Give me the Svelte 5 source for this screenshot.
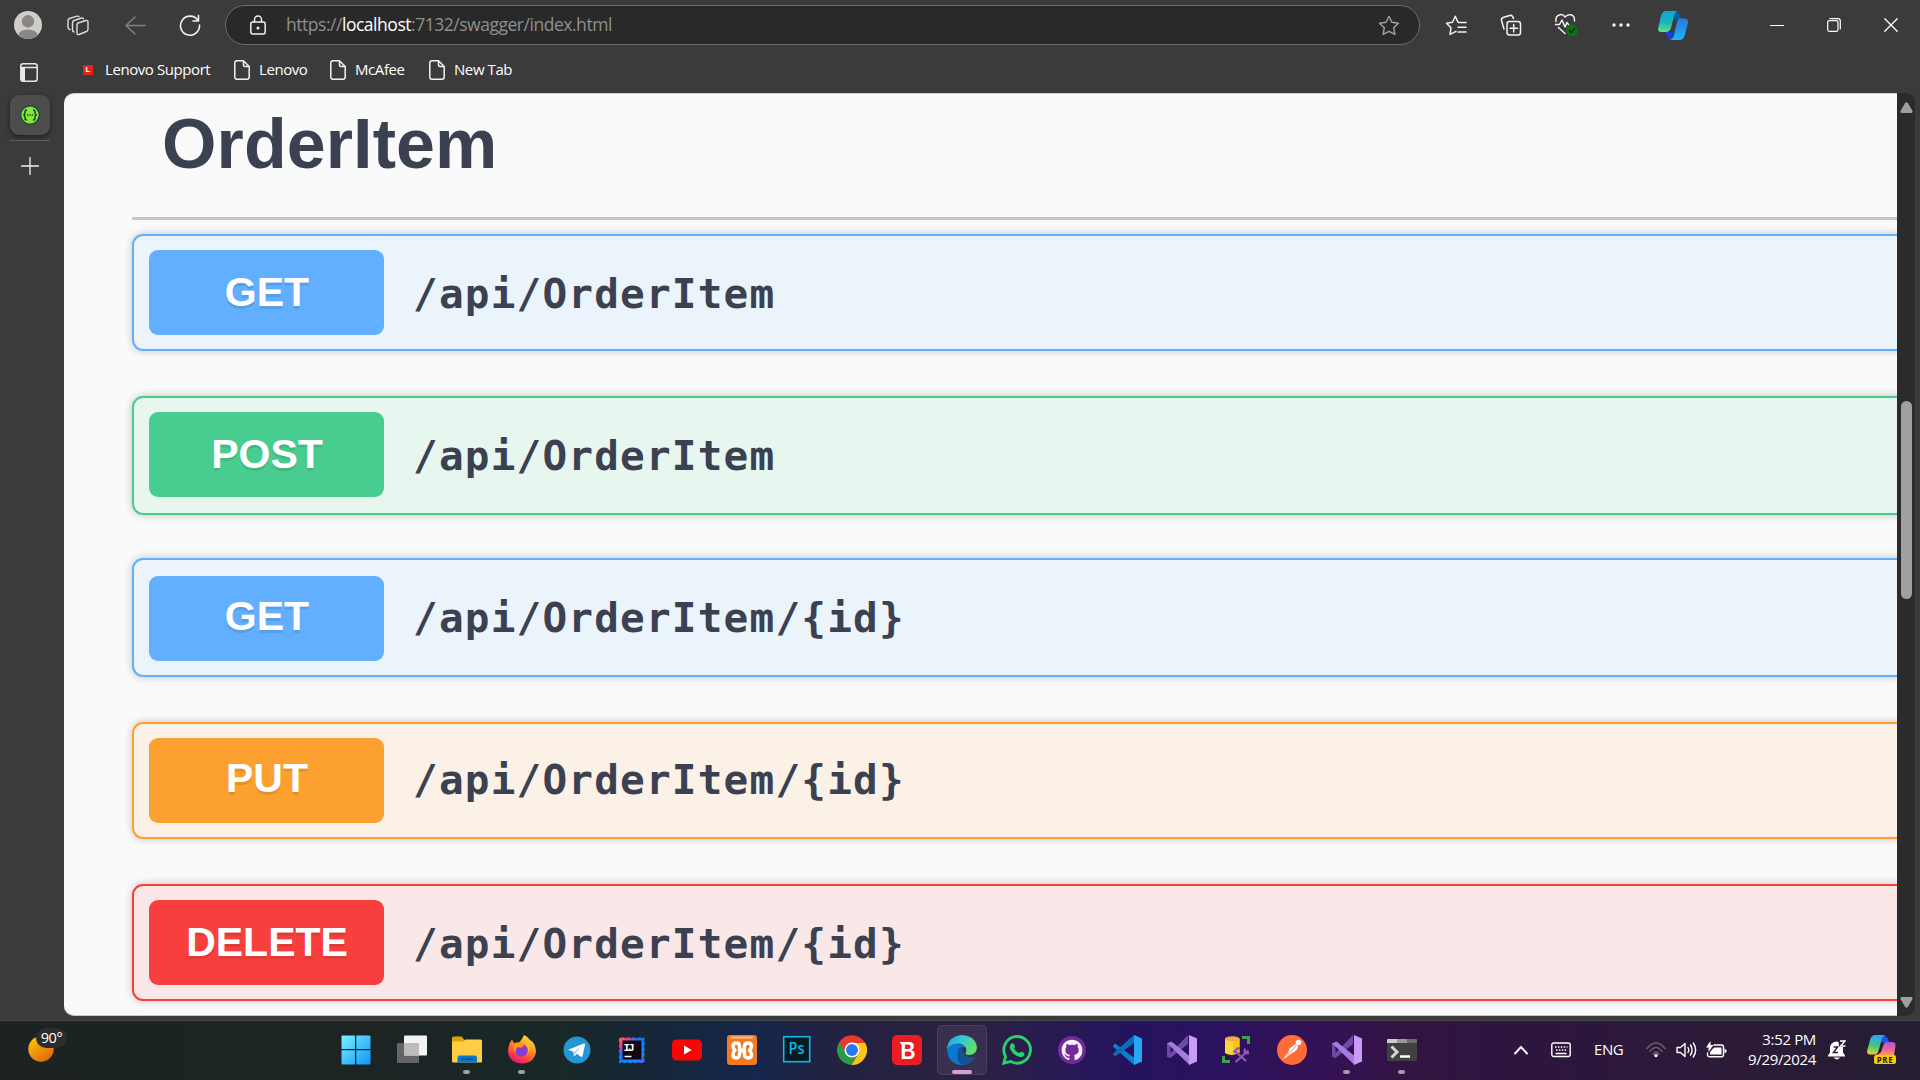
<script>
  const operations = [
    { method: 'GET', path: '/api/OrderItem' },
    { method: 'POST', path: '/api/OrderItem' },
    { method: 'GET', path: '/api/OrderItem/{id}' },
    { method: 'PUT', path: '/api/OrderItem/{id}' },
    { method: 'DELETE', path: '/api/OrderItem/{id}' },
  ];
  const bookmarks = ['Lenovo', 'McAfee', 'New Tab'];
  const apps = [
    { id: 'start' }, { id: 'taskview' }, { id: 'explorer', open: true }, { id: 'firefox', open: true },
    { id: 'telegram' }, { id: 'idea' }, { id: 'youtube' }, { id: 'xampp' }, { id: 'photoshop' },
    { id: 'chrome' }, { id: 'bitdefender' }, { id: 'edge', active: true }, { id: 'whatsapp' },
    { id: 'github' }, { id: 'vscode' }, { id: 'vs' }, { id: 'ssms' }, { id: 'postman' },
    { id: 'vs', open: true }, { id: 'terminal', open: true },
  ];
</script>

{#snippet visualStudio()}
  <path d="M0 8.500 3.500 7v16L0 21.500z" fill="#6d4aa3" />
  <path d="M0 21.500 3.500 23 21 9V0L3 18.500z" fill="#6c4aa5" />
  <path d="M0 8.500 4.500 6.500 22.500 21v9L3 11z" fill="#a67be0" />
  <path d="M22 0 30 3.500v23L22 30z" fill="#c99bfb" />
{/snippet}

<div class="screen">
  <header class="toolbar">
    <span class="cell">
      <svg width="28" height="28" viewBox="0 0 28 28">
        <defs><clipPath id="face"><circle cx="14" cy="14" r="14" /></clipPath></defs>
        <g clip-path="url(#face)">
          <rect width="28" height="28" fill="#d0cec9" />
          <circle cx="14" cy="10.300" r="6.200" fill="#8a8683" />
          <ellipse cx="14" cy="25" rx="10" ry="6.600" fill="#8a8683" />
        </g>
      </svg>
    </span>
    <span class="cell">
      <svg class="line" width="22" height="21" viewBox="0 0 22 21" stroke="#dcdcdc" stroke-width="1.400">
        <path d="M11 8 19 5.500Q21 5 21 7v7Q21 16 19.500 16.500L12 19.500Q10 20 10 18V10Q10 8.500 11 8z" />
        <path d="M7 17Q5.500 16.500 5.500 15V8Q5.500 6 7 5.500L14.500 3Q16 2.600 16.500 4" />
        <path d="M3 14.500Q1 14 1 12.500V5.500Q1 4 2.500 3.500L10 1.200Q11.500 .8 12 1.800" />
      </svg>
    </span>
    <span class="cell">
      <svg class="line" width="21" height="19" viewBox="0 0 21 19" stroke="#828282" stroke-width="1.400"><path d="M10 1 1 9.500 10 18M1 9.500H20" /></svg>
    </span>
    <span class="cell">
      <svg class="line" width="22" height="22" viewBox="0 0 22 22" stroke="#f2f2f2" stroke-width="1.600"><path d="M19 6.500A9.500 9.500 0 1 0 20.500 11M19.500 1.500V7H14" /></svg>
    </span>
    <div class="address">
      <svg class="line lock" width="16" height="20" viewBox="0 0 16 20" stroke="#f0f0f0" stroke-width="1.500"><rect x=".8" y="7" width="14.400" height="12" rx="2" /><path d="M4.500 7V4.500a3.500 3.500 0 0 1 7 0V7" /><circle cx="8" cy="13" r=".8" fill="#f0f0f0" /></svg>
      <span class="url">https://<b>localhost</b>:7132/swagger/index.html</span>
      <svg class="line star" width="22" height="21" viewBox="0 0 22 21" stroke="#a3a3a3" stroke-width="1.400"><path d="M11 1.300 13.900 7.300 20.500 8.200 15.700 12.800 16.900 19.400 11 16.300 5.100 19.400 6.300 12.800 1.500 8.200 8.100 7.300z" /></svg>
    </div>
    <span class="cell">
      <svg class="line" width="22" height="21" viewBox="0 0 22 21" stroke="#f2f2f2" stroke-width="1.500"><path d="M13.500 7.300H13L10.300 1.300 7.500 7.300 1.500 8.200 6 12.800 5 19.400 11 16.300M13.500 7.500H21M13 12.200H21M13 16.900H21" /></svg>
    </span>
    <span class="cell">
      <svg class="line" width="22" height="22" viewBox="0 0 22 22" stroke="#f2f2f2" stroke-width="1.500"><rect x="7" y="7.500" width="13.500" height="13.500" rx="2.500" /><path d="M13.700 10.500v7.500M10 14.200h7.500M4 15 1.500 6.500Q1 4.500 3 3.500L10.500 1.200Q12.500 1 13.500 4.500" /></svg>
    </span>
    <span class="cell">
      <svg class="line" width="24" height="24" viewBox="0 0 24 24" stroke="#f2f2f2" stroke-width="1.500"><path d="M2 8.500Q1 3 6 1.700 9 1 11 4 13.500 1 17 1.800 21 3 20.500 8M1.500 11.500H5.500L8 7 11 14 13 9.500 14.500 11.500M4.500 14.500 11 20.500" /><circle cx="18" cy="17.500" r="6" fill="#107010" stroke="none" /><path d="M15.300 17.600 17.300 19.500 20.700 15.800" stroke="#062c06" /></svg>
    </span>
    <span class="cell">
      <svg width="18" height="4" viewBox="0 0 18 4" fill="#f5f5f5"><circle cx="2" cy="2" r="1.700" /><circle cx="9" cy="2" r="1.700" /><circle cx="16" cy="2" r="1.700" /></svg>
    </span>
    <span class="cell">
      <svg width="30" height="29" viewBox="0 0 30 29">
        <defs>
          <linearGradient id="cpA" x1="0" y1="0" x2="0" y2="1"><stop offset="0" stop-color="#0fa4dd" /><stop offset=".55" stop-color="#19b5b8" /><stop offset="1" stop-color="#67de8d" /></linearGradient>
          <linearGradient id="cpB" x1="0" y1="0" x2="0" y2="1"><stop offset="0" stop-color="#2b77dd" /><stop offset="1" stop-color="#18b5fb" /></linearGradient>
        </defs>
        <path d="M16 0q5 0 6 4l1 4h-8z" fill="#0a5f97" />
        <path d="M7 21h8l-1 8q-4 0-5-4z" fill="#1b3fd0" />
        <path d="M8 0H19q-2 1-3 5L13 17q-1.500 4-5 4H3Q-.5 21 .2 17L3 5Q4.500 0 8 0z" fill="url(#cpA)" />
        <path d="M21 7.500h6q3.500 0 3 4l-3 12q-1.500 5.500-6 5.500h-9q3-1 4-5l3-12.500q.5-4 2-4z" fill="url(#cpB)" />
      </svg>
    </span>
    <i></i>
    <span class="cell"><svg class="line" width="14" height="14" viewBox="0 0 14 14" stroke="#fff" stroke-width="1.200"><path d="M0 7.500H14" /></svg></span>
    <span class="cell"><svg class="line" width="14" height="14" viewBox="0 0 14 14" stroke="#fff" stroke-width="1.200"><rect x=".7" y="2.700" width="10.300" height="10.600" rx="1.500" /><path d="M3 .7H11Q13.300.7 13.300 3V11" /></svg></span>
    <span class="cell"><svg class="line" width="14" height="14" viewBox="0 0 14 14" stroke="#fff" stroke-width="1.300"><path d="M.8.8 13.200 13.200M13.200.8.8 13.200" /></svg></span>
  </header>

  <nav class="bookmarks">
    <svg class="panel line" width="18" height="19" viewBox="0 0 18 19" stroke="#e8e8e8" stroke-width="1.500"><rect x=".8" y=".8" width="16.400" height="17.400" rx="2.500" /><path d="M1 4.500H17" /><path d="M1 5H5V18H2.500L1 16.500z" fill="#e8e8e8" stroke="none" /></svg>
    <a class="bm lead"><span class="fav">L</span><span class="name">Lenovo Support</span></a>
    {#each bookmarks as name, i}
      <a class="bm b{i}">
        <svg class="line" width="16" height="20" viewBox="0 0 16 20" stroke="#f2f2f2" stroke-width="1.500"><path d="M3 .8H9.500L15.200 6.500V17Q15.200 19.200 13 19.200H3Q.8 19.200.8 17V3Q.8.8 3 .8zM9.500 1V5Q9.500 6.500 11 6.500H15" /></svg>
        <span class="name">{name}</span>
      </a>
    {/each}
  </nav>

  <div class="body">
    <aside>
      <div class="tab">
        <svg width="20" height="20" viewBox="0 0 20 20"><circle cx="10" cy="10" r="9.300" fill="#85ea2d" stroke="#1f4a3c" stroke-width="1.400" /><g fill="none" stroke="#173647" stroke-width="1.400"><path d="M7 5Q5 5 5 7 5 10 3.300 10 5 10 5 13 5 15 7 15M13 5Q15 5 15 7 15 10 16.700 10 15 10 15 13 15 15 13 15" /><path d="M7 10H13.500" stroke-dasharray="1.300 1.100" /></g></svg>
      </div>
      <hr />
      <svg class="line" width="18" height="18" viewBox="0 0 18 18" stroke="#f0f0f0" stroke-width="1.300"><path d="M9 .5V17.500M.5 9H17.500" /></svg>
    </aside>
    <main>
      <h1>OrderItem</h1>
      <div class="ops">
        {#each operations as op}
          <section class="op {op.method.toLowerCase()}">
            <span class="method">{op.method}</span>
            <span class="path">{op.path}</span>
          </section>
        {/each}
      </div>
    </main>
    <div class="scroll">
      <svg width="13" height="11" viewBox="0 0 13 11"><path d="M5 1.200Q6.500-.5 8 1.200L12.500 9Q13 11 11 11H2Q0 11 .5 9z" fill="#a0a0a0" /></svg>
      <div class="thumb"></div>
      <svg class="down" width="13" height="11" viewBox="0 0 13 11"><path d="M5 1.200Q6.500-.5 8 1.200L12.500 9Q13 11 11 11H2Q0 11 .5 9z" fill="#a0a0a0" /></svg>
    </div>
  </div>

  <footer>
    <div class="weather">
      <svg width="26" height="26" viewBox="0 0 26 26"><defs><linearGradient id="sun" x1="0" y1="0" x2=".8" y2="1"><stop offset="0" stop-color="#ffcf08" /><stop offset="1" stop-color="#e0620c" /></linearGradient></defs><circle cx="13" cy="13" r="12.700" fill="url(#sun)" /></svg>
      <span class="temp">90°</span>
    </div>
    <div class="apps">
      {#each apps as app}
        <div class="slot {app.id}" class:active={app.active}>
          <svg width="30" height="30" viewBox="0 0 30 30">
            {#if app.id === 'start'}
              <defs><linearGradient id="win" gradientUnits="userSpaceOnUse" x1="0" y1="0" x2="30" y2="30"><stop offset="0" stop-color="#7df3ff" /><stop offset="1" stop-color="#0a94fb" /></linearGradient></defs>
              <path d="M.5 1.500Q.5.500 1.500.500H14V14H.5zM15.300.500H28.500Q29.500.500 29.500 1.500V14H15.300zM.5 15.300H14V29.500H1.500Q.5 29.500.5 28.500zM15.300 15.300H29.500V28.500Q29.500 29.500 28.500 29.500H15.300z" fill="url(#win)" />
            {:else if app.id === 'taskview'}
              <rect y="8" width="22" height="20" rx="1" fill="#66646a" /><rect x="7" y=".5" width="23" height="20" rx="1" fill="#f4f4f4" /><rect x="7" y="8" width="15" height="12.500" fill="#bcbcbc" />
            {:else if app.id === 'explorer'}
              <path d="M0 3Q0 1.500 1.500 1.500H9.500L12.500 5V9H0z" fill="#dba208" /><path d="M0 6.500H11L13.500 4.500H28.500Q30 4.500 30 6V26.500Q30 27.500 29 27.500H1Q0 27.500 0 26.500z" fill="#ffcd45" /><path d="M5.500 27.500V23Q5.500 20.500 8 20.500H22.500Q25 20.500 25 23V27.500z" fill="#0b76cc" /><path d="M9 24.200H21.500" stroke="#064b92" stroke-width="1.300" />
            {:else if app.id === 'firefox'}
              <defs><linearGradient id="ff" x1=".8" y1="0" x2=".3" y2="1"><stop offset="0" stop-color="#ffe83d" /><stop offset=".45" stop-color="#ff8b20" /><stop offset=".85" stop-color="#fb2b55" /><stop offset="1" stop-color="#d8148b" /></linearGradient></defs>
              <path d="M5 4.500 7 8.500Q9 7.500 12 7.500 15 5 17 0 20 1 23 5 28.500 8 29 16 28 28 15 28.500 2 28 1 16 1.500 9 5 4.500z" fill="url(#ff)" /><circle cx="14.500" cy="15.500" r="6.200" fill="#8a3bd6" /><path d="M7 8Q14 6 17 11 14 14 11 12 8 14 9 18 5 13 7 8z" fill="#ff9420" /><path d="M18 9Q23 12 20 19 26 12 20 5z" fill="#ffc02b" />
            {:else if app.id === 'telegram'}
              <circle cx="15" cy="15" r="13.500" fill="#2396d3" /><path d="M6 14.700 22 8.500Q23.500 8.300 23 10L20.500 21Q20 22.500 18.500 21.500L14.800 18.700 12.800 21 11.700 20.500 11.500 16.800z" fill="#fff" /><path d="M11.500 17 19.500 11 13.800 18 12.500 20.700z" fill="#b8d8ea" />
            {:else if app.id === 'idea'}
              <defs><linearGradient id="ij" x1="0" y1="0" x2="1" y2="1"><stop offset="0" stop-color="#fe7b4c" /><stop offset=".2" stop-color="#f0388c" /><stop offset=".38" stop-color="#0a7cff" /><stop offset=".75" stop-color="#168bfb" /><stop offset="1" stop-color="#6257e8" /></linearGradient></defs>
              <rect x="2" y="2.500" width="25.500" height="25.500" fill="url(#ij)" /><rect x="5.500" y="5.500" width="19" height="19" fill="#130512" /><rect x="2.300" y="2.800" width="24.900" height="24.900" fill="none" stroke="#000" stroke-width=".8" stroke-dasharray="1.500 4" />
              <text x="6.500" y="15.500" font-size="11" font-family="Liberation Mono" font-weight="700" fill="#fff" textLength="11">IJ</text><path d="M7.500 21.500h7" stroke="#fff" stroke-width="1.500" />
            {:else if app.id === 'youtube'}
              <rect y="4.500" width="30" height="21" rx="4.500" fill="#f90505" /><path d="M12 10.500 19.800 15 12 19.500z" fill="#fff" />
            {:else if app.id === 'xampp'}
              <rect width="30" height="30" rx="3" fill="#f37a24" /><rect x="4" y="1.500" width="22" height="2" fill="#f9ba91" />
              <path d="M12.500 15.300V11Q12.500 8 9.500 8 6 8 6 11.300 6 13.500 8 15.300 6 17 6 19.500 6 23 9.500 23 12.500 22.500 12.500 19.500 12.500 16.500 15 15.300 17.500 14.200 17.500 11 18 8 21 8 24.500 8 24.500 11.300 24.500 13.500 22.500 15.300 24.500 17 24.500 19.500 24.500 23 21 23 17.500 22.500 17.500 19.500V15.300z" fill="none" stroke="#fff" stroke-width="3.400" stroke-linejoin="round" />
            {:else if app.id === 'photoshop'}
              <rect x="1.700" y="1.700" width="26" height="25" fill="#071a22" stroke="#0cb8ee" stroke-width="1.600" /><text x="6.500" y="19" font-size="15.500" font-family="Open Sans" font-weight="600" fill="#0ab7e8" textLength="16" lengthAdjust="spacingAndGlyphs">Ps</text>
            {:else if app.id === 'chrome'}
              <path d="M2 7.500A15 15 0 0 0 14.500 30L21.500 18.500 15 15z" fill="#2b9a48" /><path d="M28 7.500H15L21.500 18.500 14.500 30A15 15 0 0 0 28 7.500z" fill="#fdc318" /><path d="M2 7.500 9 18 15 8H28A15 15 0 0 0 2 7.500z" fill="#e33b2e" /><circle cx="15" cy="15" r="7.500" fill="#fff" /><circle cx="15" cy="15" r="6" fill="#2b78ec" />
            {:else if app.id === 'bitdefender'}
              <rect width="30" height="30" rx="5" fill="#ed1c24" /><text x="8.500" y="23.500" font-size="24" font-family="Liberation Sans" font-weight="700" fill="#fff" textLength="15" lengthAdjust="spacingAndGlyphs">B</text><path d="M7.500 7H12V9.500H9.500z" fill="#fff" />
            {:else if app.id === 'edge'}
              <defs><linearGradient id="edgeTop" x1="0" y1="0" x2="1" y2=".4"><stop offset="0" stop-color="#2999de" /><stop offset=".5" stop-color="#36c5d6" /><stop offset="1" stop-color="#5fe06a" /></linearGradient></defs>
              <path d="M0 14Q1 1 15 0 29 1 30 13 29 20 22 20 18 20 18.500 17.500 20 16 19 13 15 7 8 9 3 10.500 0 14z" fill="url(#edgeTop)" /><path d="M0 14Q4 8.500 11 9 17 9.500 19 13 13 10 11 16 10 24 19 26 24 26 28 22.500 22 31 13 30 1 28 0 14z" fill="#0b78d0" /><path d="M11 16Q12.500 11 16.500 12 14.500 15 17 19 21 24 28 21.500 23 30 15 30 9 26 11 16z" fill="#125295" />
            {:else if app.id === 'whatsapp'}
              <path d="M1.800 28.200 3.600 21.400A13.300 13.300 0 1 1 8.600 26.400z" fill="none" stroke="#25d366" stroke-width="2.800" /><path d="M9.500 8.500Q11.500 7.500 12.500 10 13.500 12 12 13.500 14 17 17.500 18 19 16.200 20.500 17 23.500 18.200 22 20.500 19.500 23.500 15 21 9.500 18 7.800 13 7.500 10 9.500 8.500z" fill="#25d366" />
            {:else if app.id === 'github'}
              <circle cx="15" cy="15" r="14" fill="#74299a" />
              <path transform="translate(4.600 4.800) scale(1.300)" d="M8 0C3.580 0 0 3.580 0 8c0 3.540 2.290 6.530 5.470 7.590.4.070.55-.17.55-.38 0-.19-.01-.82-.01-1.490-2.010.37-2.530-.49-2.690-.94-.09-.23-.48-.94-.82-1.130-.28-.15-.68-.52-.01-.53.63-.01 1.080.58 1.230.82.72 1.210 1.870.87 2.330.66.07-.52.28-.87.51-1.070-1.780-.2-3.640-.89-3.640-3.950 0-.87.31-1.590.82-2.150-.08-.2-.36-1.020.08-2.120 0 0 .67-.21 2.200.82.64-.18 1.320-.27 2-.27s1.360.09 2 .27c1.530-1.040 2.200-.82 2.200-.82.44 1.100.16 1.920.08 2.120.51.56.82 1.270.82 2.150 0 3.070-1.870 3.750-3.650 3.950.29.25.54.73.54 1.480 0 1.070-.01 1.930-.01 2.200 0 .21.15.46.55.38A8.010 8.010 0 0 0 16 8c0-4.420-3.580-8-8-8z" fill="#f6f3fa" />
            {:else if app.id === 'vscode'}
              <path d="M1 10.500 3 8.500 22 22.500V30L1 11.500z" fill="#0d7fcf" /><path d="M1 19.500 3 21.500 22 8V0L1 18.500z" fill="#0a6fb8" /><path d="M22 0 30 3.500V26.500L22 30z" fill="#27a7f3" />
            {:else if app.id === 'vs'}
              {@render visualStudio()}
            {:else if app.id === 'ssms'}
              <path d="M3 3.500V18Q10 22 17.500 17.500V3.500z" fill="#fad638" /><path d="M11 4H17.500V17.500L11 19z" fill="#f6c90a" /><ellipse cx="10.300" cy="3.700" rx="7.200" ry="2.500" fill="#f2ab4b" /><path d="M20 2.500H26.500V9M1.500 21V26.500H8" fill="none" stroke="#3da34b" stroke-width="3" /><path d="M13 16 24 26M11.500 17.500 15.500 13.500H18M26.500 15.500 13.500 27M23 13.500 22.500 18.500 27 18" fill="none" stroke="#9555b7" stroke-width="2.300" />
            {:else if app.id === 'postman'}
              <circle cx="15" cy="15" r="15" fill="#ff6c37" /><circle cx="21.500" cy="7.500" r="2.800" fill="#fff" /><path d="M18.500 9 21 11.500Q20.500 15.500 15 18L7.500 23.500 6 24 11.500 17 12.500 13.500z" fill="#fff" /><path d="M19 11 10 20.500" stroke="#ff6c37" stroke-width=".8" />
            {:else if app.id === 'terminal'}
              <rect y="4" width="30" height="22" rx="1.500" fill="#414141" /><path d="M0 8V5Q0 4 1 4H10V8z" fill="#cfcbd2" /><path d="M10 4H20V8H10z" fill="#9b979d" /><path d="M20 4H29Q30 4 30 5V8H20z" fill="#6c696f" /><path d="M4.500 11.500 10 17 4.500 22.500" fill="none" stroke="#d5d5d5" stroke-width="3" /><path d="M13 21.500H23" stroke="#fff" stroke-width="2.500" />
            {/if}
          </svg>
          {#if app.open || app.active}<span class="mark"></span>{/if}
        </div>
      {/each}
    </div>
    <div class="tray">
      <svg class="line" width="14" height="10" viewBox="0 0 14 10" stroke="#fff" stroke-width="1.900"><path d="M1 8.500 7 2 13 8.500" /></svg>
      <svg class="line kb" width="20" height="16" viewBox="0 0 20 16" stroke="#fff" stroke-width="1.400"><rect x=".8" y="1" width="18.400" height="13.500" rx="2" /><path d="M4 5H16.500M5 8H16" stroke-linecap="butt" stroke-dasharray="1.500 1.400" /><path d="M5 11.500H15" /></svg>
      <span class="lang">ENG</span>
      <svg class="line wifi" width="20" height="16" viewBox="0 0 20 16" stroke="#6a6072" stroke-width="1.500"><path d="M1 6.500Q10-4.500 19 6.500M4 9.500Q10 1.500 16 9.500M7 12Q10 8 13 12" /><circle cx="10" cy="13.500" r="1.700" fill="#fff" stroke="none" /></svg>
      <svg class="line vol" width="21" height="18" viewBox="0 0 21 18" stroke="#fff" stroke-width="1.400"><path d="M1 6.500H4.500L9 2.500V15.500L4.500 11.500H1zM12 6.500Q13.500 9 12 11.500M14.500 4Q17.700 9 14.500 14M17.300 2Q22 9 17.300 16" /></svg>
      <svg class="line bat" width="21" height="18" viewBox="0 0 21 18" stroke="#fff" stroke-width="1.400"><path d="M8 4H15.500Q17.500 4 17.500 6V13.500Q17.500 15.800 15.500 15.800H4Q1.500 15.800 1.500 13.500V12" /><path d="M8 6.500H15.500V13.500H4V11z" fill="#fff" stroke="none" /><path d="M18.500 7.500V12.500L20.500 11V9z" fill="#fff" stroke="none" /><path d="M4.500 0V4H7.500L2.500 11V6.500H0z" fill="#fff" stroke="none" /></svg>
      <div class="clock"><span>3:52 PM</span><span>9/29/2024</span></div>
      <svg class="bell" width="18" height="20" viewBox="0 0 18 20"><path d="M0 15.500 2 12.500V7Q3 2 8.500 1.500 14 2 15 7V12.500L17 15.500V16.500H0zM5.500 17.500H12Q9 21.500 5.500 17.500z" fill="#fff" /><path d="M5.500 7H9.500L5.500 12.500H10" fill="none" stroke="#2a1b38" stroke-width="1.500" /><path d="M10.500 0H18V7H11z" fill="#2a1b38" /><path d="M12 1H17L12.500 6H17.500" fill="none" stroke="#fff" stroke-width="1.400" /></svg>
      <div class="copilot">
        <svg width="29" height="29" viewBox="0 0 29 29">
          <defs><linearGradient id="pa" x1=".2" y1="0" x2="0" y2="1"><stop offset="0" stop-color="#26a8f5" /><stop offset=".5" stop-color="#4ec27c" /><stop offset="1" stop-color="#f4d620" /></linearGradient><linearGradient id="pb" x1="0" y1="0" x2="0" y2="1"><stop offset="0" stop-color="#a94fe8" /><stop offset=".6" stop-color="#f06a90" /><stop offset="1" stop-color="#ff9b4e" /></linearGradient></defs>
          <path d="M15 0Q21 0 22 7.500H14z" fill="#1c55d8" /><path d="M8 0H18Q15.500 1 14.500 5L11.500 16Q10.500 19.500 7 19.500H3Q-.5 19.500.2 15.500L3 5Q4.500 0 8 0z" fill="url(#pa)" /><path d="M19 7H26Q29 7.500 28.500 11L27 20H6Q12 20 14 17L16.500 9.500Q17 7 19 7z" fill="url(#pb)" />
        </svg>
        <span class="pre">PRE</span>
      </div>
    </div>
  </footer>
</div>

<style>
  :global(body) { margin: 0; background: #3b3b3b; overflow: hidden; }
  * { box-sizing: border-box; }
  svg { display: block; flex: none; }
  .line { fill: none; stroke-linecap: round; stroke-linejoin: round; }
  .screen { width: 1920px; height: 1080px; display: flex; flex-direction: column; background: #3b3b3b; font-family: 'Open Sans', 'Noto Sans', sans-serif; overflow: hidden; }

  .toolbar { height: 50px; flex: none; display: grid; grid-template-columns: 56px 44px 70px 40px 1218px 55px 55px 55px 55px 50px 1fr 57px 57px 58px; align-items: center; }
  .cell { display: flex; justify-content: center; align-items: center; }
  .address { width: 1195px; height: 40px; margin-left: 15px; padding: 0 19px 0 24px; border: 1px solid #6c6c6c; border-radius: 20px; background: #292929; display: flex; align-items: center; }
  .url { margin-left: 20px; padding-bottom: 2px; flex: 1; font-size: 17.500px; line-height: 36px; color: #8f8f8f; letter-spacing: -.47px; white-space: nowrap; }
  .url b { font-weight: 400; color: #fff; }

  .bookmarks { height: 43px; flex: none; display: flex; align-items: center; padding-bottom: 3px; color: #fff; font-size: 15px; }
  .panel { margin: 4px 0 0 20px; }
  .bm { display: flex; align-items: center; white-space: nowrap; letter-spacing: -.42px; }
  .bm.lead { width: 151px; margin-left: 45px; }
  .name { padding-bottom: 2px; }
  .fav { width: 10px; height: 10px; margin-right: 12px; background: #e1251b; font: 700 8px/10px 'Liberation Sans', sans-serif; text-align: center; letter-spacing: 0; }
  .bm svg { margin-right: 9px; }
  .b0 { width: 96px; }
  .b1 { width: 99px; }

  .body { height: 923px; flex: none; display: flex; }
  aside { width: 64px; display: flex; flex-direction: column; align-items: center; padding: 2px 4px 0 0; }
  .tab { width: 40px; height: 40px; border-radius: 9px; background: #4d4d4d; box-shadow: 0 2px 5px rgba(0, 0, 0, .5); display: flex; align-items: center; justify-content: center; }
  hr { width: 40px; height: 1px; margin: 5px 0 16px; border: 0; background: #5e5e5e; }
  aside > svg { margin-right: 1px; }
  main { width: 1833px; overflow: hidden; background: #fafafa; border-top: 1px solid #cfcfcf; border-bottom: 1px solid #c8c8c8; border-radius: 10px 0 0 10px; padding-left: 68px; color: #3b4151; }
  h1 { height: 126px; margin: 0; padding: 10px 0 0 30px; border-bottom: 3px solid #c5c5cc; font: 700 70px/80px 'Liberation Sans', Arial, sans-serif; letter-spacing: .1px; }
  .ops { padding-top: 14px; }
  .op { width: 1900px; height: 117px; margin-bottom: 45px; padding: 14px 14.500px; border: 2px solid; border-radius: 11px; box-shadow: 0 0 8px rgba(0, 0, 0, .22); display: flex; align-items: flex-start; }
  .op:nth-child(2) { height: 119px; margin-bottom: 43px; }
  .op:nth-child(3) { height: 119px; padding-top: 16px; }
  .method { width: 235px; height: 85px; padding-left: 2px; border-radius: 9px; text-align: center; color: #fff; font: 700 41px/84px 'Liberation Sans', Arial, sans-serif; text-shadow: 0 3px 0 rgba(0, 0, 0, .1); }
  .path { padding: 16px 0 0 29.500px; font: 700 41px/56px 'DejaVu Sans Mono', monospace; letter-spacing: 1.200px; white-space: pre; }
  .op:nth-child(3) .method { line-height: 81px; }
  .op:nth-child(4) .method { line-height: 81px; }
  .op:nth-child(3) .path, .op:nth-child(4) .path { padding-top: 14px; }
  .get { border-color: #61affe; background: #ebf3fb; }
  .get .method { background: #61affe; }
  .post { border-color: #49cc90; background: #e8f6f0; }
  .post .method { background: #49cc90; }
  .put { border-color: #fca130; background: #fbf1e6; }
  .put .method { background: #fca130; }
  .delete { border-color: #f93e3e; background: #fae7e7; }
  .delete .method { background: #f93e3e; }

  .scroll { width: 18px; background: #2b2b2b; border-radius: 0 9px 9px 0; display: flex; flex-direction: column; align-items: center; padding: 9px 0 8px; }
  .thumb { width: 11px; height: 198px; margin: 288px 0 auto; border-radius: 6px; background: #a0a0a0; }
  .down { transform: rotate(180deg); }

  footer { height: 60px; margin-top: auto; padding-bottom: 2px; flex: none; border-top: 1px solid #454647; display: flex; align-items: center; color: #fff; background: linear-gradient(90deg, #1d2323 0, #1c2424 400px, #192827 560px, #15263a 660px, #16264c 755px, #232140 840px, #2c2140 960px, #2a1b50 1040px, #25135e 1130px, #2a125f 1210px, #351155 1330px, #32143f 1420px, #2d153f 1500px, #2b1a38 1720px, #251d33 1920px); }
  .weather { width: 330px; height: 57px; padding: 15px 0 0 28px; position: relative; }
  .temp { position: absolute; left: 36px; top: 7px; width: 31px; height: 20px; border-radius: 10px; background: #2d2d2d; font-size: 14.500px; line-height: 20px; text-align: center; letter-spacing: -.4px; }
  .apps { display: flex; gap: 5px; }
  .slot { width: 50px; height: 50px; display: flex; align-items: center; justify-content: center; border-radius: 5px; position: relative; }
  .slot.start { width: 52px; padding-right: 1px; }
  .active { background: rgba(255, 255, 255, .07); border: 1px solid rgba(255, 255, 255, .08); }
  .mark { position: absolute; bottom: 1px; left: 50%; width: 7px; height: 4px; margin-left: -4px; border-radius: 2px; background: #a09ba5; }
  .active .mark { width: 20px; margin-left: -10px; bottom: 0; background: #d79de2; }
  .tray { margin-left: auto; display: flex; align-items: center; padding-right: 24px; }
  .kb { margin-left: 23px; }
  .lang { width: 29px; margin: 0 23px 0 23px; padding-bottom: 1px; font-size: 15px; letter-spacing: -.4px; white-space: nowrap; }
  .vol { margin-left: 10px; }
  .bat { margin-left: 9px; }
  .clock { width: 70px; margin: 0 12px 2px 19px; display: flex; flex-direction: column; align-items: flex-end; font-size: 15px; line-height: 20px; letter-spacing: -.35px; white-space: nowrap; }
  .copilot { width: 29px; height: 29px; margin-left: 21px; position: relative; }
  .pre { position: absolute; left: 7px; top: 20px; width: 22px; height: 9px; border-radius: 2px; background: #ffc800; color: #1d1a10; font: 700 8px/9px 'Open Sans', sans-serif; text-align: center; letter-spacing: .5px; }
</style>
